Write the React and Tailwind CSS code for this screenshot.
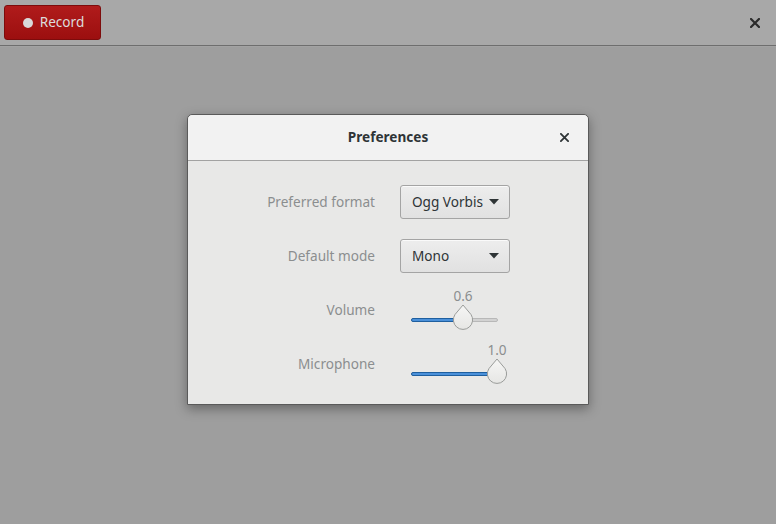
import { useState } from 'react'

function Combo({ value }) {
  return (
    <button className="h-[34px] w-[110px] flex items-center justify-between pl-[11px] pr-[10px] rounded-[3px] border border-[#a4a4a4] bg-gradient-to-b from-[#ededed] to-[#e1e1e1] text-[#2e3436] text-[13.6px] shadow-[inset_0_1px_0_#fafafa]">
      <span>{value}</span>
      <svg viewBox="0 0 10 6" className="w-[10px] h-[6px]">
        <path d="M0 0h10L5 5.5z" fill="#2e3436" />
      </svg>
    </button>
  )
}

function Slider({ value }) {
  const x = value * 85
  return (
    <div className="relative h-[34px] w-[110px]">
      <span
        className="absolute top-[-5px] -translate-x-1/2 text-[13.6px] leading-4 text-[#8b8e8f]"
        style={{ left: 12 + x }}
      >
        {value.toFixed(1)}
      </span>
      <div className="absolute top-[25px] left-[11px] w-[87px] h-[4px] rounded-full bg-[#d2d2d2] border border-[#b8b8b8]" />
      <div
        className="absolute top-[25px] left-[11px] h-[4px] rounded-full bg-[#4a90d9] border border-[#1f5f9f]"
        style={{ width: x + 2 }}
      />
      <svg
        viewBox="0 0 22 26"
        className="absolute top-[11px] w-[22px] h-[26px]"
        style={{ left: 12 + x - 11 }}
      >
        <defs>
          <linearGradient id="kn" x1="0" y1="0" x2="0" y2="1">
            <stop offset="0" stopColor="#f6f6f5" />
            <stop offset="1" stopColor="#e6e6e4" />
          </linearGradient>
        </defs>
        <path
          d="M11 1 L19 10.5 A9.6 9.6 0 1 1 3 10.5 Z"
          fill="url(#kn)"
          stroke="#9a9c9a"
          strokeWidth="1"
          strokeLinejoin="round"
        />
      </svg>
    </div>
  )
}

export default function App() {
  const [rows] = useState([
    { label: 'Preferred format', el: <Combo value="Ogg Vorbis" /> },
    { label: 'Default mode', el: <Combo value="Mono" /> },
    { label: 'Volume', el: <Slider value={0.6} /> },
    { label: 'Microphone', el: <Slider value={1.0} /> },
  ])

  return (
    <div className="w-[776px] h-[524px] flex flex-col bg-[#9e9e9e] overflow-hidden" style={{ fontFamily: '"Noto Sans", "Open Sans", sans-serif' }}>
      <header className="h-[46px] shrink-0 flex items-center justify-between pl-[4px] pr-[15px] bg-[#a8a8a8] border-b border-b-[#6e6e6e] shadow-[0_1px_0_#a3a3a3]">
        <button className="h-[35px] w-[97px] flex items-center justify-center gap-[7px] pl-[2px] rounded-[3px] border border-[#7d0c0c] bg-gradient-to-b from-[#b01b1b] to-[#9c0f0f] text-[#dcdcdc] text-[13.6px]">
          <span className="w-[10px] h-[10px] rounded-full bg-[#d9d9d9]" />
          Record
        </button>
        <svg viewBox="0 0 10 10" className="w-[10px] h-[10px] mr-[1px]">
          <path d="M1 1L9 9M9 1L1 9" stroke="#2b2b2b" strokeWidth="2.2" strokeLinecap="square" />
        </svg>
      </header>

      <main className="flex-1 flex justify-center pt-[68px]">
        <div className="w-[402px] h-[291px] flex flex-col rounded-t-[5px] border border-[#5a5a5a] bg-[#e8e8e7] shadow-[0_4px_12px_rgba(0,0,0,0.35)]">
          <div className="h-[46px] shrink-0 relative flex items-center justify-center rounded-t-[5px] bg-[#f2f2f2] border-b border-b-[#a2a2a2]">
            <span className="text-[13.6px] font-bold text-[#2e3436]">Preferences</span>
            <svg viewBox="0 0 10 10" className="absolute right-[19px] w-[9px] h-[9px]">
              <path d="M1 1L9 9M9 1L1 9" stroke="#2e3436" strokeWidth="2" strokeLinecap="square" />
            </svg>
          </div>
          <div className="grid grid-cols-[187px_auto] gap-x-[25px] gap-y-[20px] pt-[24px] items-center">
            {rows.map((r) => (
              <div key={r.label} className="contents">
                <span className="text-right text-[13.6px] text-[#8b8e8f] leading-[34px]">{r.label}</span>
                {r.el}
              </div>
            ))}
          </div>
        </div>
      </main>
    </div>
  )
}
